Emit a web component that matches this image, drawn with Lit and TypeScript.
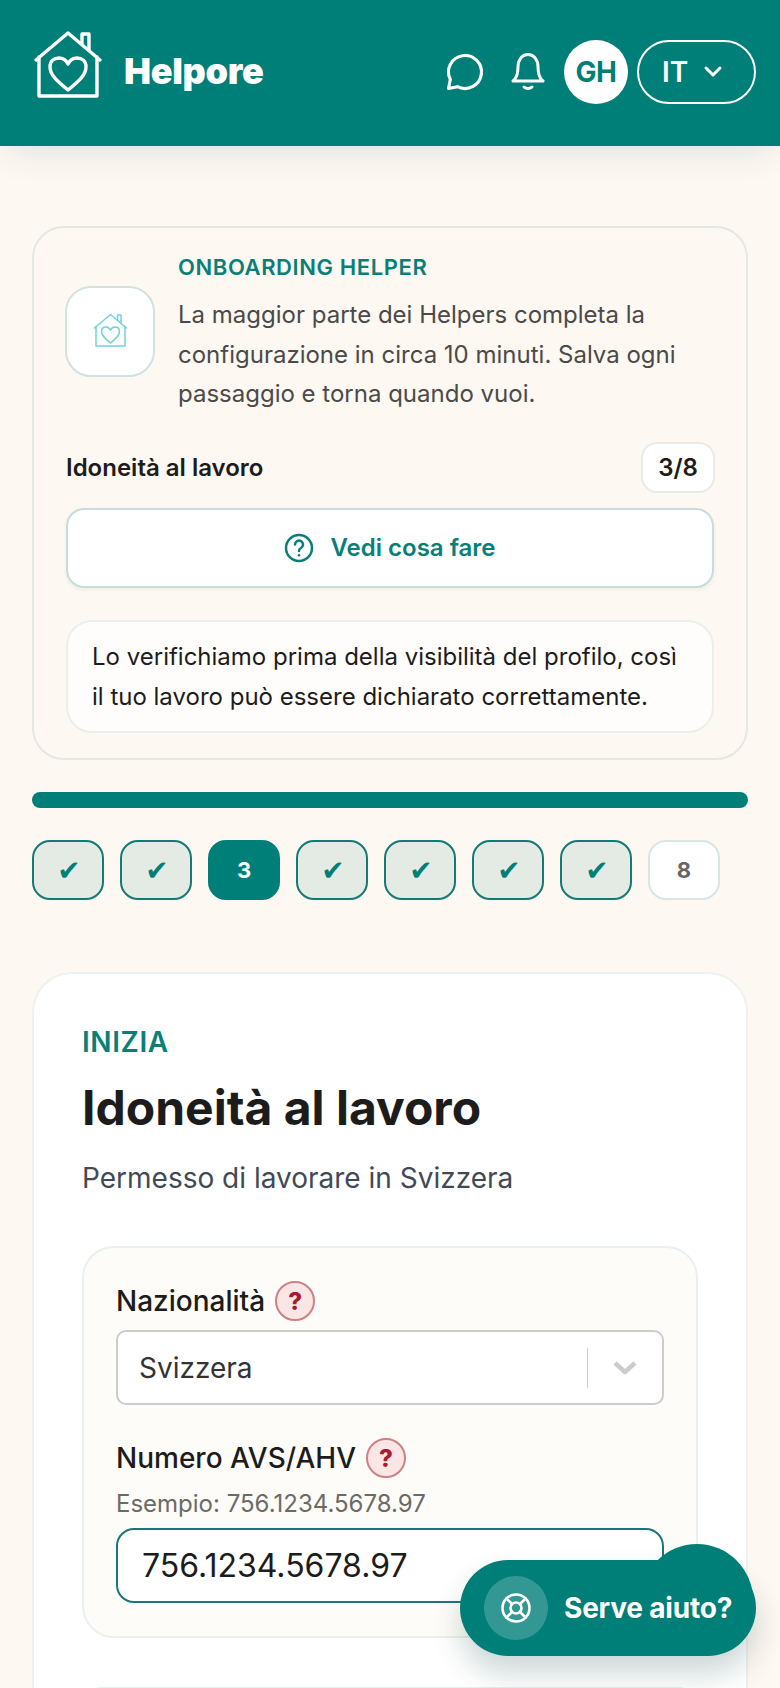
import { LitElement, html, css, svg } from "lit";
import { customElement } from "lit/decorators.js";

const house = svg`<path d="M3 30 L35 3 L67 30"/><path d="M49 14 V4 H56 V20"/><path d="M6 27 V66 H64 V27"/><path d="M35 60 C24 51 17 45 17 37 C17 31 21 28 26 28 C30 28 33 30 35 34 C37 30 40 28 44 28 C49 28 53 31 53 37 C53 45 46 51 35 60Z"/>`;

@customElement("app-root")
export class AppRoot extends LitElement {
  static styles = css`
    :host { display: block; height: 1688px; overflow: hidden; background: #fdf8f1; font-family: Inter, "Liberation Sans", sans-serif; color: #1c1c1c; position: relative; }
    * { box-sizing: border-box; }
    svg { display: block; fill: none; stroke: currentColor; stroke-linecap: round; stroke-linejoin: round; }
    .header { height: 146px; background: #007f78; color: #fff; display: flex; align-items: center; padding: 0 24px 2px 33px; box-shadow: 0 14px 30px -8px rgba(0,127,120,.14); position: relative; }
    .logo { width: 70px; height: 68px; stroke-width: 3.4; margin-top: -16px; }
    .brand { font-size: 36px; font-weight: 900; margin-left: 21px; letter-spacing: -0.3px; margin-top: -2px; flex: 1; }
    .chat { width: 44px; height: 44px; stroke-width: 1.7; margin-right: 24px; }
    .bell { width: 34px; height: 38px; stroke-width: 3; margin-right: 19px; }
    .avatar { width: 64px; height: 64px; border-radius: 50%; background: #fff; color: #007f78; font-weight: 700; font-size: 28px; display: flex; align-items: center; justify-content: center; margin-right: 9px; letter-spacing: -.5px; }
    .lang { width: 119px; height: 64px; border-radius: 32px; border: 2px solid #fff; display: flex; align-items: center; justify-content: center; gap: 15px; font-size: 28px; font-weight: 600; padding-right: 8px; }
    .lang svg { width: 20px; height: 14px; stroke-width: 3; }
    .main { padding: 0 32px; }
    .helper { margin-top: 80px; height: 534px; border: 2px solid #e3e8e2; border-radius: 32px; padding: 25px 32px 0; }
    .top { display: flex; align-items: flex-start; gap: 23px; }
    .icon-box { width: 90px; height: 91px; flex: none; margin: 33px 0 0 -1px; background: #fff; border: 2px solid #d3e2de; border-radius: 26px; display: flex; align-items: center; justify-content: center; color: #6fd3d6; }
    .icon-box svg { width: 35px; height: 34px; stroke-width: 3; margin-bottom: 4px; }
    .eyebrow { font-size: 22px; line-height: 28px; font-weight: 600; color: #0a7f78; letter-spacing: .6px; margin-bottom: 14px; }
    .para { font-size: 24px; line-height: 39.6px; color: #4a4a4a; margin: 0; }
    .row { display: flex; align-items: center; justify-content: space-between; margin-top: 28px; }
    .row b { font-size: 24px; font-weight: 600; }
    .badge { width: 74px; height: 51px; margin-right: -1px; background: #fff; border: 2px solid #e8ebe6; border-radius: 16px; display: flex; align-items: center; justify-content: center; font-size: 24px; font-weight: 600; }
    .btn { height: 80px; margin-top: 15px; background: #fff; border: 2px solid #c5dedb; border-radius: 18px; display: flex; align-items: center; justify-content: center; gap: 16px; color: #0a7f78; font-size: 24px; font-weight: 600; box-shadow: 0 2px 4px rgba(0,80,70,.06); }
    .btn svg { width: 30px; height: 30px; stroke-width: 2.5; }
    .note { height: 113px; margin-top: 32px; background: #fffdfb; border: 2px solid #ebefeb; border-radius: 26px; padding: 15px 24px 0; font-size: 24px; line-height: 40px; }
    .bar { height: 16px; margin-top: 32px; border-radius: 8px; background: #007f78; }
    .steps { display: flex; gap: 16px; margin-top: 32px; }
    .step { width: 72px; height: 60px; border-radius: 18px; display: flex; align-items: center; justify-content: center; font-size: 22px; font-weight: 700; }
    .done { background: #e4ebe5; border: 2px solid #137a74; color: #007f78; font-family: "DejaVu Sans", sans-serif; font-size: 28px; font-weight: 400; padding-left: 2px; }
    .cur { background: #007f78; color: #fff; }
    .todo { background: #fff; border: 2px solid #d8e6e4; color: #666; }
    .card { margin-top: 72px; background: #fff; border: 2px solid #edf2ee; border-radius: 40px; padding: 49px 48px 0; height: 900px; }
    .kicker { font-size: 28px; line-height: 38px; font-weight: 600; color: #0a7f78; letter-spacing: .6px; }
    h1 { font-size: 48px; line-height: 60px; font-weight: 700; margin: 17px 0 0; }
    .sub { font-size: 28px; line-height: 40px; color: #3f4a55; margin-top: 20px; }
    .inner { margin-top: 48px; height: 392px; background: #fefcf9; border: 2px solid #e9f0ed; border-radius: 32px; padding: 33px 32px 0; }
    .label { display: flex; align-items: center; gap: 10px; font-size: 28px; font-weight: 500; height: 40px; }
    .q { width: 40px; height: 40px; border-radius: 50%; background: #fbe6e6; border: 2px solid #d07f85; color: #ab1a2e; font-size: 24px; font-weight: 800; display: flex; align-items: center; justify-content: center; }
    .select { height: 75px; margin-top: 9px; background: #fff; border: 2px solid #ccc; border-radius: 10px; display: flex; align-items: center; padding-left: 21px; font-size: 28px; color: #333; }
    .select span { flex: 1; }
    .select i { width: 1.5px; height: 40px; background: #ccc; }
    .select svg { width: 24px; height: 14px; stroke: #ccc; stroke-width: 4.4; stroke-linecap: butt; margin: 0 25px 0 25px; }
    .label.second { margin-top: 33px; }
    .hint { font-size: 24px; line-height: 30px; color: #6b6b66; margin-top: 11px; }
    .input { height: 75px; margin-top: 9px; background: #fff; border: 2px solid #17787a; border-radius: 18px; display: flex; align-items: center; padding-left: 24px; font-size: 32px; color: #1c1c1c; }
    .next { margin-top: 49px; height: 60px; border: 2px solid #e3f0ed; border-radius: 20px; }
    .fab { position: absolute; left: 460px; top: 1560px; width: 296px; height: 96px; border-radius: 48px; background: #007f78; color: #fff; display: flex; align-items: center; gap: 16px; padding-left: 24px; font-size: 28px; font-weight: 700; letter-spacing: -.2px; box-shadow: 0 18px 30px rgba(0,60,55,.2); }
    .fab::before { content: ""; position: absolute; left: 181px; top: -16px; width: 112px; height: 112px; border-radius: 50%; background: #007f78; }
    .fab > * { position: relative; }
    .ring { width: 64px; height: 64px; border-radius: 50%; background: rgba(255,255,255,.2); display: flex; align-items: center; justify-content: center; }
    .ring svg { width: 32px; height: 32px; stroke-width: 2.6; }
  `;

  render() {
    const steps = ["✔", "✔", "3", "✔", "✔", "✔", "✔", "8"];
    return html`
      <div class="header">
        <svg class="logo" viewBox="0 0 70 68">${house}</svg>
        <div class="brand">Helpore</div>
        <svg class="chat" viewBox="0 0 24 24"><path d="M7.9 20A9 9 0 1 0 4 16.1L3 21 Z"/></svg>
        <svg class="bell" viewBox="0 0 34 38"><path d="M2 28 C6 25 7 21 7 14 C7 7 11 1.5 17 1.5 C23 1.5 27 7 27 14 C27 21 28 25 32 28 Z"/><path d="M13 34 C15 36 19 36 21 34"/></svg>
        <div class="avatar">GH</div>
        <div class="lang">IT <svg viewBox="0 0 20 14"><path d="M3 3 L10 10 L17 3"/></svg></div>
      </div>
      <div class="main">
        <section class="helper">
          <div class="top">
            <div class="icon-box"><svg viewBox="0 0 70 68">${house}</svg></div>
            <div>
              <div class="eyebrow">ONBOARDING HELPER</div>
              <p class="para">La maggior parte dei Helpers completa la configurazione in circa 10 minuti. Salva ogni passaggio e torna quando vuoi.</p>
            </div>
          </div>
          <div class="row"><b>Idoneità al lavoro</b><div class="badge">3/8</div></div>
          <div class="btn">
            <svg viewBox="0 0 30 30"><circle cx="15" cy="15" r="13"/><path d="M11 11.5 a4 4 0 1 1 6 3.5 c-1.4.8 -2 1.5 -2 3"/><path d="M15 22.2 v.1"/></svg>
            Vedi cosa fare
          </div>
          <div class="note">Lo verifichiamo prima della visibilità del profilo, così il tuo lavoro può essere dichiarato correttamente.</div>
        </section>
        <div class="bar"></div>
        <div class="steps">
          ${steps.map((s) => html`<div class="step ${s === "✔" ? "done" : s === "3" ? "cur" : "todo"}">${s}</div>`)}
        </div>
        <section class="card">
          <div class="kicker">INIZIA</div>
          <h1>Idoneità al lavoro</h1>
          <div class="sub">Permesso di lavorare in Svizzera</div>
          <div class="inner">
            <div class="label">Nazionalità <span class="q">?</span></div>
            <div class="select"><span>Svizzera</span><i></i><svg viewBox="0 0 24 14"><path d="M2 2 L12 11 L22 2"/></svg></div>
            <div class="label second">Numero AVS/AHV <span class="q">?</span></div>
            <div class="hint">Esempio: 756.1234.5678.97</div>
            <div class="input">756.1234.5678.97</div>
          </div>
          <div class="next"></div>
        </section>
      </div>
      <div class="fab">
        <div class="ring"><svg viewBox="0 0 32 32"><circle cx="16" cy="16" r="13.5"/><circle cx="16" cy="16" r="5.5"/><path d="M6.5 6.5 L12 12 M25.5 6.5 L20 12 M6.5 25.5 L12 20 M25.5 25.5 L20 20"/></svg></div>
        <span>Serve aiuto?</span>
      </div>
    `;
  }
}
